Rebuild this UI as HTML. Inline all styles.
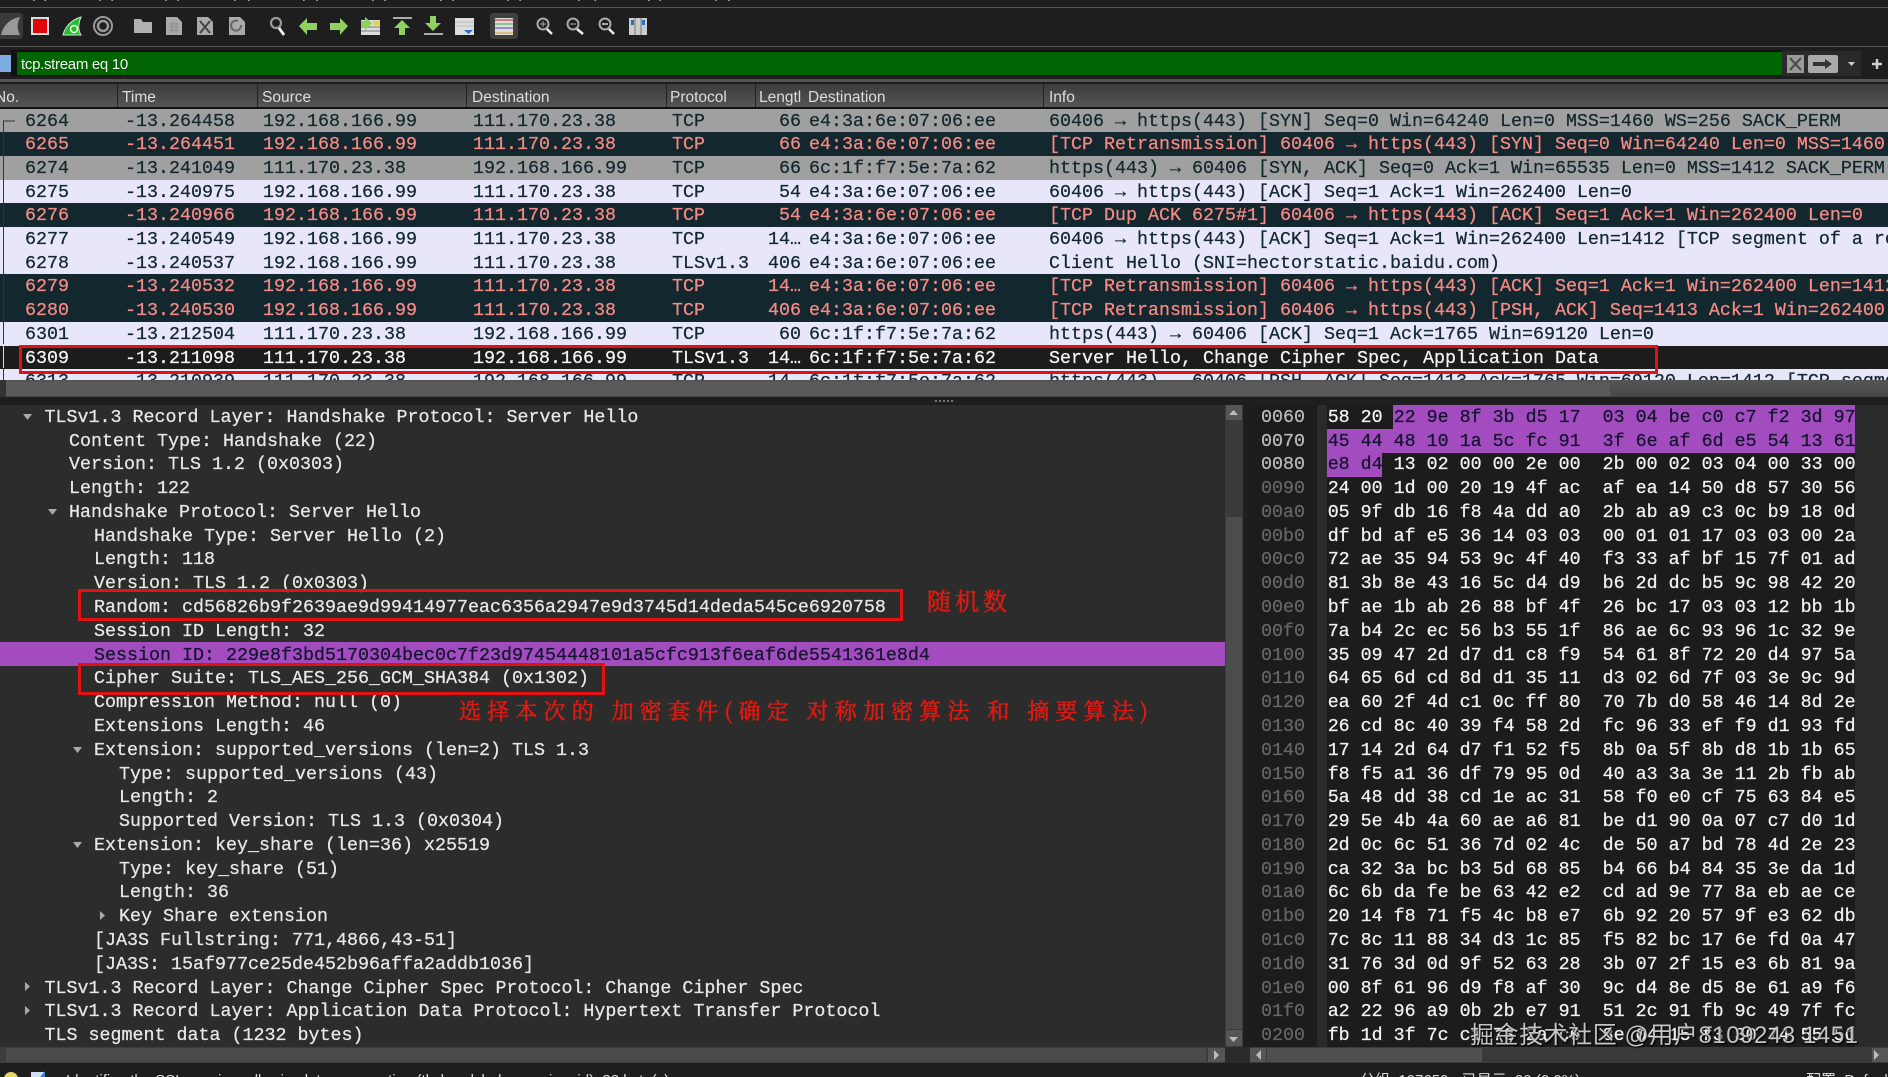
<!DOCTYPE html>
<html><head><meta charset="utf-8"><title>Wireshark</title>
<style>
html,body{margin:0;padding:0;background:#1e1e1e}
#p{position:relative;width:1888px;height:1077px;overflow:hidden;background:#1e1e1e;font-family:"Liberation Mono","Noto Sans CJK SC",monospace;font-size:18.33px;color:#e8e8e8}
.a{position:absolute}
.h{position:absolute;top:86px;height:23px;font:15.5px/24px "Liberation Sans","Noto Sans CJK SC",sans-serif;color:#ddd;white-space:pre}
.s{position:absolute;top:84px;height:23px;width:1px;background:#222}
.r{position:absolute;left:0;width:1888px;height:23.7px;line-height:26px;white-space:pre;overflow:hidden;-webkit-text-stroke:.25px}
.r span{position:absolute;top:0}
.g{background:#a0a0a0;color:#12272e}
.k{background:#12272e;color:#f78a85}
.l{background:#e7e6fb;color:#12272e}
.c1{left:25px}.c2{left:125px}.c3{left:263px}.c4{left:473px}.c5{left:672px}.c6{right:1087px}.c7{left:809px}.c8{left:1049px}
.d{position:absolute;height:23.78px;line-height:26px;white-space:pre;-webkit-text-stroke:.25px}
.x{position:absolute;left:1261px;height:23.78px;line-height:26px;white-space:pre;color:#666;-webkit-text-stroke:.25px}
.y{position:absolute;left:1327.7px;height:23.78px;line-height:26px;white-space:pre;color:#f2f2f2;-webkit-text-stroke:.25px}
.b{color:#14142e}
.m{position:absolute;top:-16px;font:15px/20px "Liberation Sans","Noto Sans CJK SC",sans-serif;color:#ccc}
.st{position:absolute;top:1071px;font:15px/20px "Liberation Sans","Noto Sans CJK SC",sans-serif;color:#ddd;white-space:pre}
</style></head><body><div id="p">

<span class="m" style="left:0">文件(F)</span><span class="m" style="left:66px">编辑(E)</span><span class="m" style="left:132px">视图(V)</span><span class="m" style="left:201px">跳转(G)</span><span class="m" style="left:270px">捕获(C)</span><span class="m" style="left:339px">分析(A)</span><span class="m" style="left:407px">统计(S)</span><span class="m" style="left:474px">电话(Y)</span><span class="m" style="left:545px">无线(W)</span><span class="m" style="left:615px">工具(T)</span><span class="m" style="left:682px">帮助(H)</span>
<div class="a" style="left:0;top:7px;width:1888px;height:1px;background:#555"></div>
<div class="a" style="left:0;top:46px;width:1888px;height:1px;background:#555"></div>

<svg class="a" style="left:0;top:8px" width="700" height="38" viewBox="0 8 700 38">
<rect x="-4" y="13" width="27" height="26" rx="3" fill="#3a3a3a"/>
<path d="M1 35C3 26 9 19 20 17C17 23 17 30 20 35Z" fill="#999"/>
<rect x="31" y="17" width="18" height="18" fill="#ddd"/><rect x="33" y="19" width="14" height="14" fill="#e00606"/>
<path d="M63 35C65 27 71 20 81 17C78 24 78 30 81 35Z" fill="#22c028" stroke="#cfe8cf"/><circle cx="74" cy="29" r="3.5" fill="none" stroke="#fff" stroke-width="1.5"/>
<circle cx="103" cy="26" r="9" fill="none" stroke="#999" stroke-width="2"/><circle cx="103" cy="26" r="5" fill="none" stroke="#999" stroke-width="2.5"/>
<path d="M134 19h7l2 3h9v11h-18z" fill="#b0b0b0"/>
<path d="M166 17h11l5 5v13h-16z" fill="#aaa"/><path d="M169 24h10M169 27h10M169 30h10M172 22v11M176 22v11" stroke="#8a8a8a" fill="none"/>
<path d="M197 17h11l5 5v13h-16z" fill="#aaa"/><path d="M200 21l10 12M210 21l-10 12" stroke="#444" stroke-width="2" fill="none"/>
<path d="M229 17h11l5 5v13h-16z" fill="#aaa"/><path d="M241 25a5 5 0 1 1-3-4" stroke="#666" stroke-width="2" fill="none"/>
<circle cx="276" cy="23" r="5" fill="none" stroke="#999" stroke-width="2.2"/><path d="M279 28l5 7" stroke="#eee" stroke-width="2.8"/>
<path d="M299 26l8-8v5h10v7h-10v5z" fill="#8fd060"/>
<path d="M348 26l-8-8v5h-10v7h10v5z" fill="#8fd060"/>
<path d="M361 20h19v15h-19z" fill="#ddd"/><path d="M361 27h19M361 31h19" stroke="#777"/><rect x="373" y="21" width="7" height="4" fill="#e8d040"/><path d="M372 23l-7-6v4h-4v6h4v4z" fill="#8fd060"/>
<rect x="393" y="17" width="19" height="2" fill="#aaa"/><path d="M402 20l8 8h-5v7h-6v-7h-5z" fill="#8fd060"/>
<rect x="424" y="33" width="19" height="2" fill="#aaa"/><path d="M433 31l8-8h-5v-7h-6v7h-5z" fill="#8fd060"/>
<rect x="455" y="18" width="19" height="17" fill="#ddd"/><path d="M455 22h19M455 26h19" stroke="#bbb"/><path d="M464 30h9l-4.500 4z" fill="#2a6fc0"/>
<rect x="490" y="13" width="28" height="26" rx="3" fill="#3f3f3f"/>
<rect x="495" y="18" width="18" height="17" fill="#ddd"/><path d="M495 20h18" stroke="#cc5a5a" stroke-width="1.5"/><path d="M495 24h18" stroke="#7ab87a" stroke-width="1.5"/><path d="M495 28h18" stroke="#7a7ac0" stroke-width="1.5"/><path d="M495 33h18" stroke="#d8b060" stroke-width="1.5"/>
<circle cx="543" cy="24" r="5.500" fill="none" stroke="#aaa" stroke-width="2"/><path d="M540 24h6M543 21v6" stroke="#aaa"/><path d="M547 29l5 5" stroke="#eee" stroke-width="2.500"/>
<circle cx="573" cy="24" r="5.500" fill="none" stroke="#aaa" stroke-width="2"/><path d="M570 24h6" stroke="#aaa"/><path d="M577 29l6 5" stroke="#eee" stroke-width="2.500"/>
<circle cx="605" cy="24" r="5.500" fill="none" stroke="#aaa" stroke-width="2"/><path d="M602 24h6" stroke="#aaa" stroke-width="2"/><path d="M609 29l5 5" stroke="#eee" stroke-width="2.500"/>
<rect x="629" y="18" width="18" height="17" fill="#ccc"/><path d="M635 18v17M641 18v17" stroke="#777"/><rect x="631" y="20" width="3" height="5" fill="#2a6fc0"/><rect x="642" y="20" width="3" height="5" fill="#2a6fc0"/>
</svg>

<div class="a" style="left:0;top:55px;width:11px;height:17px;background:#7eaee0"></div>
<div class="a" style="left:11px;top:50px;width:1771px;height:26px;background:#111"></div>
<div class="a" style="left:17px;top:52px;width:1765px;height:23px;background:#006400"></div>
<div class="a" style="left:21px;top:53px;font:15px/24px 'Liberation Sans',sans-serif;letter-spacing:-.3px;color:#f2f2f2">tcp.stream eq 10</div>
<div class="a" style="left:1782px;top:51px;width:79px;height:25px;background:#2a2a2a;border-radius:2px"></div>
<svg class="a" style="left:1780px;top:50px" width="108" height="28">
<rect x="7" y="5" width="17" height="18" fill="#999"/><path d="M10 8l11 12M21 8l-11 12" stroke="#444" stroke-width="2"/>
<rect x="28" y="5" width="30" height="18" rx="2" fill="#aaa"/><path d="M33 12h12v-3l7 5-7 5v-3h-12z" fill="#333"/>
<path d="M68 12h7l-3.500 4z" fill="#ccc"/><path d="M92 14h10M97 9v10" stroke="#ccc" stroke-width="2.500"/>
</svg>
<div class="a" style="left:0;top:79px;width:1888px;height:3px;background:#555"></div>

<div class="a" style="left:0;top:84px;width:1888px;height:23px;background:linear-gradient(#3c3c3c,#555)"></div>
<div class="a" style="left:0;top:107px;width:1888px;height:1.600px;background:#111"></div>
<span class="h" style="left:-5px">No.</span><span class="h" style="left:122px">Time</span><span class="h" style="left:262px">Source</span><span class="h" style="left:472px">Destination</span><span class="h" style="left:670px">Protocol</span><span class="h" style="left:759px">Lengtl</span><span class="h" style="left:808px">Destination</span><span class="h" style="left:1049px">Info</span>
<i class="s" style="left:117px"></i><i class="s" style="left:257px"></i><i class="s" style="left:466px"></i><i class="s" style="left:666px"></i><i class="s" style="left:755px"></i><i class="s" style="left:1043px"></i>

<div class="a" style="left:0;top:108.600px;width:1888px;height:271.400px;overflow:hidden">
<div class="r g" style="top:0"><span class="c1">6264</span><span class="c2">-13.264458</span><span class="c3">192.168.166.99</span><span class="c4">111.170.23.38</span><span class="c5">TCP</span><span class="c6">66</span><span class="c7">e4:3a:6e:07:06:ee</span><span class="c8">60406 → https(443) [SYN] Seq=0 Win=64240 Len=0 MSS=1460 WS=256 SACK_PERM</span></div>
<div class="r k" style="top:23.700px"><span class="c1">6265</span><span class="c2">-13.264451</span><span class="c3">192.168.166.99</span><span class="c4">111.170.23.38</span><span class="c5">TCP</span><span class="c6">66</span><span class="c7">e4:3a:6e:07:06:ee</span><span class="c8">[TCP Retransmission] 60406 → https(443) [SYN] Seq=0 Win=64240 Len=0 MSS=1460 WS=256</span></div>
<div class="r g" style="top:47.400px"><span class="c1">6274</span><span class="c2">-13.241049</span><span class="c3">111.170.23.38</span><span class="c4">192.168.166.99</span><span class="c5">TCP</span><span class="c6">66</span><span class="c7">6c:1f:f7:5e:7a:62</span><span class="c8">https(443) → 60406 [SYN, ACK] Seq=0 Ack=1 Win=65535 Len=0 MSS=1412 SACK_PERM</span></div>
<div class="r l" style="top:71.100px"><span class="c1">6275</span><span class="c2">-13.240975</span><span class="c3">192.168.166.99</span><span class="c4">111.170.23.38</span><span class="c5">TCP</span><span class="c6">54</span><span class="c7">e4:3a:6e:07:06:ee</span><span class="c8">60406 → https(443) [ACK] Seq=1 Ack=1 Win=262400 Len=0</span></div>
<div class="r k" style="top:94.800px"><span class="c1">6276</span><span class="c2">-13.240966</span><span class="c3">192.168.166.99</span><span class="c4">111.170.23.38</span><span class="c5">TCP</span><span class="c6">54</span><span class="c7">e4:3a:6e:07:06:ee</span><span class="c8">[TCP Dup ACK 6275#1] 60406 → https(443) [ACK] Seq=1 Ack=1 Win=262400 Len=0</span></div>
<div class="r l" style="top:118.500px"><span class="c1">6277</span><span class="c2">-13.240549</span><span class="c3">192.168.166.99</span><span class="c4">111.170.23.38</span><span class="c5">TCP</span><span class="c6">14…</span><span class="c7">e4:3a:6e:07:06:ee</span><span class="c8">60406 → https(443) [ACK] Seq=1 Ack=1 Win=262400 Len=1412 [TCP segment of a reassembled PDU]</span></div>
<div class="r l" style="top:142.200px"><span class="c1">6278</span><span class="c2">-13.240537</span><span class="c3">192.168.166.99</span><span class="c4">111.170.23.38</span><span class="c5">TLSv1.3</span><span class="c6">406</span><span class="c7">e4:3a:6e:07:06:ee</span><span class="c8">Client Hello (SNI=hectorstatic.baidu.com)</span></div>
<div class="r k" style="top:165.900px"><span class="c1">6279</span><span class="c2">-13.240532</span><span class="c3">192.168.166.99</span><span class="c4">111.170.23.38</span><span class="c5">TCP</span><span class="c6">14…</span><span class="c7">e4:3a:6e:07:06:ee</span><span class="c8">[TCP Retransmission] 60406 → https(443) [ACK] Seq=1 Ack=1 Win=262400 Len=1412 [TCP</span></div>
<div class="r k" style="top:189.600px"><span class="c1">6280</span><span class="c2">-13.240530</span><span class="c3">192.168.166.99</span><span class="c4">111.170.23.38</span><span class="c5">TCP</span><span class="c6">406</span><span class="c7">e4:3a:6e:07:06:ee</span><span class="c8">[TCP Retransmission] 60406 → https(443) [PSH, ACK] Seq=1413 Ack=1 Win=262400 Len=352</span></div>
<div class="r l" style="top:213.300px"><span class="c1">6301</span><span class="c2">-13.212504</span><span class="c3">111.170.23.38</span><span class="c4">192.168.166.99</span><span class="c5">TCP</span><span class="c6">60</span><span class="c7">6c:1f:f7:5e:7a:62</span><span class="c8">https(443) → 60406 [ACK] Seq=1 Ack=1765 Win=69120 Len=0</span></div>
<div class="r" style="top:237px;background:#1c1c1c;color:#f4f4f4"><span class="c1">6309</span><span class="c2">-13.211098</span><span class="c3">111.170.23.38</span><span class="c4">192.168.166.99</span><span class="c5">TLSv1.3</span><span class="c6">14…</span><span class="c7">6c:1f:f7:5e:7a:62</span><span class="c8">Server Hello, Change Cipher Spec, Application Data</span></div>
<div class="r l" style="top:260.700px"><span class="c1">6313</span><span class="c2">-13.210939</span><span class="c3">111.170.23.38</span><span class="c4">192.168.166.99</span><span class="c5">TCP</span><span class="c6">14…</span><span class="c7">6c:1f:f7:5e:7a:62</span><span class="c8">https(443) → 60406 [PSH, ACK] Seq=1413 Ack=1765 Win=69120 Len=1412 [TCP segment of a</span></div>
</div>
<svg class="a" style="left:0;top:108px" width="20" height="272"><path d="M3.500 272V13H15" fill="none" stroke="#333" stroke-width="1"/><path d="M3.500 236v24" stroke="#ddd"/></svg>
<div class="a" style="left:19px;top:344.500px;width:1633px;height:23px;border:3px solid #e31212"></div>

<div class="a" style="left:0;top:380px;width:1888px;height:17px;background:linear-gradient(#555,#474747)"></div>
<div class="a" style="left:0;top:380px;width:6px;height:17px;background:#333"></div>
<div class="a" style="left:6px;top:382px;width:1604px;height:14px;background:#5a5a5a"></div>
<div class="a" style="left:0;top:397px;width:1888px;height:8px;background:#1e1e1e"></div>
<div class="a" style="left:935px;top:400px;width:18px;height:2px;background:repeating-linear-gradient(90deg,#777 0 2px,transparent 2px 4px)"></div>

<div class="a" style="left:0;top:405px;width:1225px;height:642px;background:#2c2c2c"></div>
<div class="a" style="left:0;top:642px;width:1225px;height:24px;background:#a24cc0"></div>

<div class="d" style="left:44.500px;top:404.800px">TLSv1.3 Record Layer: Handshake Protocol: Server Hello</div>
<div class="d" style="left:69px;top:428.580px">Content Type: Handshake (22)</div>
<div class="d" style="left:69px;top:452.360px">Version: TLS 1.2 (0x0303)</div>
<div class="d" style="left:69px;top:476.140px">Length: 122</div>
<div class="d" style="left:69px;top:499.920px">Handshake Protocol: Server Hello</div>
<div class="d" style="left:94px;top:523.700px">Handshake Type: Server Hello (2)</div>
<div class="d" style="left:94px;top:547.480px">Length: 118</div>
<div class="d" style="left:94px;top:571.260px">Version: TLS 1.2 (0x0303)</div>
<div class="d" style="left:94px;top:595.040px">Random: cd56826b9f2639ae9d99414977eac6356a2947e9d3745d14deda545ce6920758</div>
<div class="d" style="left:94px;top:618.820px">Session ID Length: 32</div>
<div class="d" style="left:94px;top:642.600px;color:#14142e">Session ID: 229e8f3bd5170304bec0c7f23d97454448101a5cfc913f6eaf6de5541361e8d4</div>
<div class="d" style="left:94px;top:666.380px">Cipher Suite: TLS_AES_256_GCM_SHA384 (0x1302)</div>
<div class="d" style="left:94px;top:690.160px">Compression Method: null (0)</div>
<div class="d" style="left:94px;top:713.940px">Extensions Length: 46</div>
<div class="d" style="left:94px;top:737.720px">Extension: supported_versions (len=2) TLS 1.3</div>
<div class="d" style="left:119px;top:761.500px">Type: supported_versions (43)</div>
<div class="d" style="left:119px;top:785.280px">Length: 2</div>
<div class="d" style="left:119px;top:809.060px">Supported Version: TLS 1.3 (0x0304)</div>
<div class="d" style="left:94px;top:832.840px">Extension: key_share (len=36) x25519</div>
<div class="d" style="left:119px;top:856.620px">Type: key_share (51)</div>
<div class="d" style="left:119px;top:880.400px">Length: 36</div>
<div class="d" style="left:119px;top:904.180px">Key Share extension</div>
<div class="d" style="left:94px;top:927.960px">[JA3S Fullstring: 771,4866,43-51]</div>
<div class="d" style="left:94px;top:951.740px">[JA3S: 15af977ce25de452b96affa2addb1036]</div>
<div class="d" style="left:44.500px;top:975.520px">TLSv1.3 Record Layer: Change Cipher Spec Protocol: Change Cipher Spec</div>
<div class="d" style="left:44.500px;top:999.300px">TLSv1.3 Record Layer: Application Data Protocol: Hypertext Transfer Protocol</div>
<div class="d" style="left:44.500px;top:1023.080px">TLS segment data (1232 bytes)</div>

<svg class="a" style="left:0;top:405px" width="130" height="642" viewBox="0 405 130 642" fill="#aaa">
<path d="M23 414h9l-4.500 6z"/><path d="M48 509h9l-4.500 6z"/><path d="M73 747h9l-4.500 6z"/><path d="M73 842h9l-4.500 6z"/>
<path d="M100 911v9l5-4.500z"/><path d="M25 982v9l5-4.500z"/><path d="M25 1006v9l5-4.500z"/>
</svg>

<div class="a" style="left:78px;top:589px;width:819px;height:26px;border:3px solid #e31212"></div>
<div class="a" style="left:78px;top:663px;width:521px;height:26px;border:3px solid #e31212"></div>
<svg class="a" style="left:0;top:570px" width="1224" height="170" font-family="'Noto Serif CJK SC',serif" fill="#dd1a12" stroke="#dd1a12" stroke-width=".6">
<text x="927" y="40" font-size="24" textLength="80" lengthAdjust="spacing">随机数</text>
<text x="459" y="149" font-size="22" textLength="689" lengthAdjust="spacing">选择本次的 加密套件(确定 对称加密算法 和 摘要算法)</text>
</svg>

<div class="a" style="left:1225px;top:405px;width:18px;height:642px;background:#3a3a3a"></div>
<div class="a" style="left:1226px;top:405px;width:16px;height:15px;background:#555"></div>
<div class="a" style="left:1226px;top:517px;width:16px;height:512px;background:#4c4c4c"></div>
<div class="a" style="left:1226px;top:1030px;width:16px;height:16px;background:#555"></div>
<svg class="a" style="left:1225px;top:405px" width="18" height="642" fill="#bbb"><path d="M4 10h9l-4.500-5z"/><path d="M4 632h9l-4.500 5z"/></svg>

<div class="a" style="left:1250px;top:405px;width:638px;height:642px;background:#2a2a2a"></div>
<div class="a" style="left:1250px;top:405px;width:67px;height:642px;background:#1c1c1c"></div>
<div class="a" style="left:1327px;top:405px;width:528px;height:642px;background:#1c1c1c"></div>
<div class="a" style="left:1393px;top:405px;width:462px;height:24px;background:#a24cc0"></div>
<div class="a" style="left:1327px;top:429px;width:528px;height:23.500px;background:#a24cc0"></div>
<div class="a" style="left:1327px;top:452.500px;width:55px;height:24px;background:#a24cc0"></div>

<div class="x" style="top:404.800px;color:#bbb">0060</div><div class="y" style="top:404.800px">58 20 <span class="b">22 9e 8f 3b d5 17  03 04 be c0 c7 f2 3d 97</span></div>
<div class="x" style="top:428.580px;color:#bbb">0070</div><div class="y b" style="top:428.580px;color:#14142e">45 44 48 10 1a 5c fc 91  3f 6e af 6d e5 54 13 61</div>
<div class="x" style="top:452.360px;color:#bbb">0080</div><div class="y" style="top:452.360px"><span class="b">e8 d4</span> 13 02 00 00 2e 00  2b 00 02 03 04 00 33 00</div>
<div class="x" style="top:476.140px">0090</div><div class="y" style="top:476.140px">24 00 1d 00 20 19 4f ac  af ea 14 50 d8 57 30 56</div>
<div class="x" style="top:499.920px">00a0</div><div class="y" style="top:499.920px">05 9f db 16 f8 4a dd a0  2b ab a9 c3 0c b9 18 0d</div>
<div class="x" style="top:523.700px">00b0</div><div class="y" style="top:523.700px">df bd af e5 36 14 03 03  00 01 01 17 03 03 00 2a</div>
<div class="x" style="top:547.480px">00c0</div><div class="y" style="top:547.480px">72 ae 35 94 53 9c 4f 40  f3 33 af bf 15 7f 01 ad</div>
<div class="x" style="top:571.260px">00d0</div><div class="y" style="top:571.260px">81 3b 8e 43 16 5c d4 d9  b6 2d dc b5 9c 98 42 20</div>
<div class="x" style="top:595.040px">00e0</div><div class="y" style="top:595.040px">bf ae 1b ab 26 88 bf 4f  26 bc 17 03 03 12 bb 1b</div>
<div class="x" style="top:618.820px">00f0</div><div class="y" style="top:618.820px">7a b4 2c ec 56 b3 55 1f  86 ae 6c 93 96 1c 32 9e</div>
<div class="x" style="top:642.600px">0100</div><div class="y" style="top:642.600px">35 09 47 2d d7 d1 c8 f9  54 61 8f 72 20 d4 97 5a</div>
<div class="x" style="top:666.380px">0110</div><div class="y" style="top:666.380px">64 65 6d cd 8d d1 35 11  d3 02 6d 7f 03 3e 9c 9d</div>
<div class="x" style="top:690.160px">0120</div><div class="y" style="top:690.160px">ea 60 2f 4d c1 0c ff 80  70 7b d0 58 46 14 8d 2e</div>
<div class="x" style="top:713.940px">0130</div><div class="y" style="top:713.940px">26 cd 8c 40 39 f4 58 2d  fc 96 33 ef f9 d1 93 fd</div>
<div class="x" style="top:737.720px">0140</div><div class="y" style="top:737.720px">17 14 2d 64 d7 f1 52 f5  8b 0a 5f 8b d8 1b 1b 65</div>
<div class="x" style="top:761.500px">0150</div><div class="y" style="top:761.500px">f8 f5 a1 36 df 79 95 0d  40 a3 3a 3e 11 2b fb ab</div>
<div class="x" style="top:785.280px">0160</div><div class="y" style="top:785.280px">5a 48 dd 38 cd 1e ac 31  58 f0 e0 cf 75 63 84 e5</div>
<div class="x" style="top:809.060px">0170</div><div class="y" style="top:809.060px">29 5e 4b 4a 60 ae a6 81  be d1 90 0a 07 c7 d0 1d</div>
<div class="x" style="top:832.840px">0180</div><div class="y" style="top:832.840px">2d 0c 6c 51 36 7d 02 4c  de 50 a7 bd 78 4d 2e 23</div>
<div class="x" style="top:856.620px">0190</div><div class="y" style="top:856.620px">ca 32 3a bc b3 5d 68 85  b4 66 b4 84 35 3e da 1d</div>
<div class="x" style="top:880.400px">01a0</div><div class="y" style="top:880.400px">6c 6b da fe be 63 42 e2  cd ad 9e 77 8a eb ae ce</div>
<div class="x" style="top:904.180px">01b0</div><div class="y" style="top:904.180px">20 14 f8 71 f5 4c b8 e7  6b 92 20 57 9f e3 62 db</div>
<div class="x" style="top:927.960px">01c0</div><div class="y" style="top:927.960px">7c 8c 11 88 34 d3 1c 85  f5 82 bc 17 6e fd 0a 47</div>
<div class="x" style="top:951.740px">01d0</div><div class="y" style="top:951.740px">31 76 3d 0d 9f 52 63 28  3b 07 2f 15 e3 6b 81 9a</div>
<div class="x" style="top:975.520px">01e0</div><div class="y" style="top:975.520px">00 8f 61 96 d9 f8 af 30  9c d4 8e d5 8e 61 a9 f6</div>
<div class="x" style="top:999.300px">01f0</div><div class="y" style="top:999.300px">a2 22 96 a9 0b 2b e7 91  51 2c 91 fb 9c 49 7f fc</div>
<div class="x" style="top:1023.080px">0200</div><div class="y" style="top:1023.080px">fb 1d 3f 7c c1 73 2a c6  8e 04 15 f3 30 74 55 5d</div>

<div class="a" style="left:0;top:1047px;width:1888px;height:16px;background:#2a2a2a"></div>
<div class="a" style="left:0;top:1047px;width:1225px;height:16px;background:#3c3c3c"></div>
<div class="a" style="left:6px;top:1048px;width:1200px;height:14px;background:#4a4a4a"></div>
<div class="a" style="left:1208px;top:1048px;width:17px;height:14px;background:#555"></div>
<div class="a" style="left:1250px;top:1047px;width:638px;height:16px;background:#3a3a3a"></div>
<div class="a" style="left:1250px;top:1048px;width:16px;height:14px;background:#555"></div>
<div class="a" style="left:1267px;top:1048px;width:215px;height:14px;background:#505050"></div>
<div class="a" style="left:1872px;top:1048px;width:16px;height:14px;background:#555"></div>
<svg class="a" style="left:1200px;top:1047px" width="688" height="16" fill="#bbb"><path d="M14 3v10l5-5z"/><path d="M61 3v10l-5-5z"/><path d="M674 3v10l5-5z"/></svg>

<div class="a" style="left:0;top:1063px;width:1888px;height:14px;background:#1e1e1e"></div>
<svg class="a" style="left:0;top:1063px" width="60" height="14"><circle cx="11" cy="16" r="7" fill="#e8d860"/><rect x="31" y="9" width="14" height="5" fill="#cfe0f0"/><path d="M45 8l-5 6h5z" fill="#3a80d0"/></svg>
<div class="st" style="left:66px">Identifies the SSL session, allowing later resumption (tls.handshake.session_id), 32 byte(s)</div>
<div class="st" style="left:1360px">分组: 107650 · 已显示: 99 (0.0%)</div>
<div class="st" style="left:1806px">配置: Default</div>

<svg class="a" style="left:1460px;top:1015px" width="410" height="40" font-family="'Liberation Sans','Noto Sans CJK SC',sans-serif" font-size="24">
<text x="11" y="29" textLength="388" lengthAdjust="spacing" fill="#000" fill-opacity=".55" stroke="#000" stroke-opacity=".35" stroke-width="2">掘金技术社区 @用户8109243 1451</text>
<text x="10" y="28" textLength="388" lengthAdjust="spacing" fill="#c4c4c4">掘金技术社区 @用户8109243 1451</text>
</svg>

</div></body></html>
